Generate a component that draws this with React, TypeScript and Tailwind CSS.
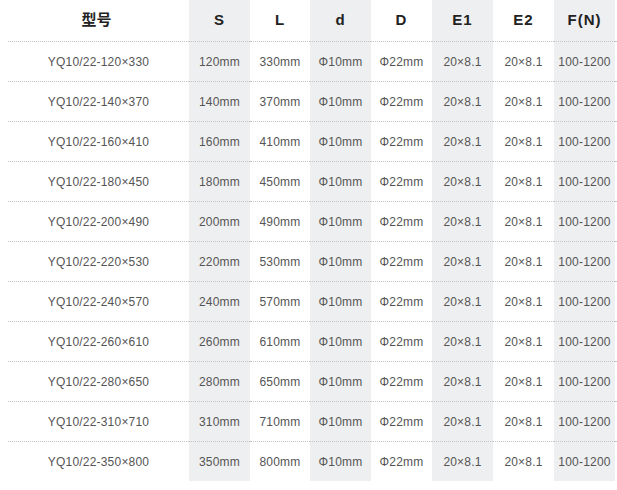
const headers = ["S", "L", "d", "D", "E1", "E2", "F(N)"];

const sizes: [string, string][] = [
  ["120", "330"],
  ["140", "370"],
  ["160", "410"],
  ["180", "450"],
  ["200", "490"],
  ["220", "530"],
  ["240", "570"],
  ["260", "610"],
  ["280", "650"],
  ["310", "710"],
  ["350", "800"],
];

// grey stripes on S, d, E1, F(N)
const shaded = [true, false, true, false, true, false, true];
const colWidths = ["w-[61px]", "w-[60px]", "w-[61px]", "w-[61px]", "w-[61px]", "w-[61px]", "w-[61px]"];

export default function App() {
  return (
    <div className="w-[617px] bg-white font-['Liberation_Sans',Arial,'Noto_Sans_CJK_SC',sans-serif]">
      <div className="flex h-[41px]">
        <div className="flex w-[189px] items-center justify-center pb-[2px] pl-1 text-[15px] font-bold text-[#222] font-['Noto_Sans_CJK_SC',sans-serif]">
          型号
        </div>
        {headers.map((h, i) => (
          <div
            key={h}
            className={`flex ${colWidths[i]} items-center justify-center text-[15px] font-bold tracking-[1px] text-[#222] ${
              shaded[i] ? "bg-[#eeeff1]" : ""
            }`}
          >
            {h}
          </div>
        ))}
      </div>

      {sizes.map(([s, l]) => {
        const cells = [`${s}mm`, `${l}mm`, "Φ10mm", "Φ22mm", "20×8.1", "20×8.1", "100-1200"];
        return (
          <div key={s} className="flex h-[40px]">
            <div className="ml-2 flex w-[181px] items-center justify-center border-t border-dotted border-[#c4c4c4] text-[12px] tracking-[0.2px] text-[#555]">
              YQ10/22-{s}×{l}
            </div>
            {cells.map((c, i) => (
              <div
                key={i}
                className={`flex ${colWidths[i]} items-center justify-center border-t border-dotted border-[#c4c4c4] text-[12px] tracking-[0.2px] text-[#555] ${
                  shaded[i] ? "bg-[#eeeff1]" : ""
                }`}
              >
                {c}
              </div>
            ))}
            <div className="w-[2px] border-t border-dotted border-[#c4c4c4]" />
          </div>
        );
      })}
    </div>
  );
}
